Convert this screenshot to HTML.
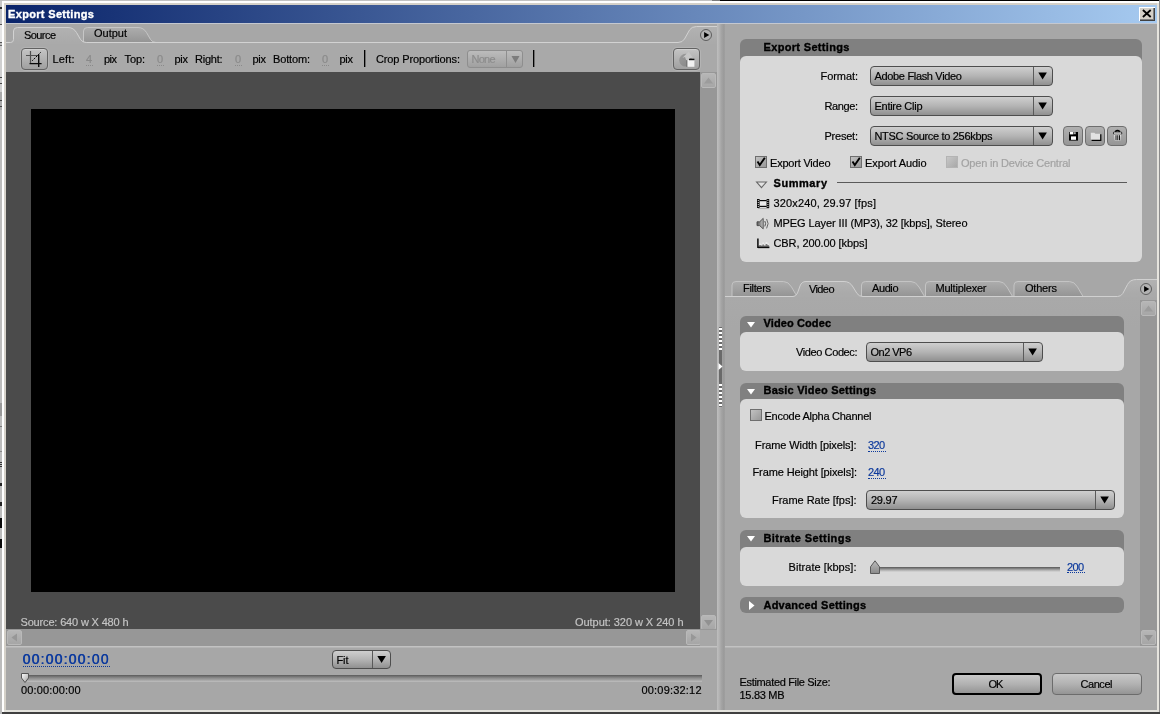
<!DOCTYPE html>
<html><head><meta charset="utf-8"><title>Export Settings</title>
<style>
html,body{margin:0;padding:0;width:1160px;height:714px;overflow:hidden;background:#d4d0c8;}
body{font-family:"Liberation Sans",sans-serif;font-size:11px;position:relative;}
.b{position:absolute;display:block;}
.t{position:absolute;white-space:nowrap;}
.du{position:absolute;height:0;border-top:1px dotted #000;}
#w{position:absolute;left:0;top:0;width:1160px;height:714px;overflow:hidden;will-change:transform;}
</style></head><body>
<div id="w">
<div class="b" style="left:0px;top:0px;width:1160px;height:714px;background:#d4d0c8;"></div>
<div class="b" style="left:0px;top:0px;width:1160px;height:1px;background:#c2c2c2;"></div>
<div class="b" style="left:712px;top:0px;width:8px;height:1px;background:#7a7a7a;"></div>
<div class="b" style="left:720px;top:0px;width:440px;height:1px;background:#000;"></div>
<div class="b" style="left:2px;top:1px;width:1157px;height:2px;background:#ffffff;"></div>
<div class="b" style="left:4px;top:3px;width:1153px;height:2px;background:#d4d0c8;"></div>
<div class="b" style="left:0px;top:0px;width:2px;height:714px;background:#bcbcbc;"></div>
<div class="b" style="left:2px;top:1px;width:2px;height:711px;background:#ffffff;"></div>
<div class="b" style="left:4px;top:3px;width:2px;height:707px;background:#d4d0c8;"></div>
<div class="b" style="left:0px;top:1px;width:2px;height:23px;background:#c8c8c8;"></div>
<div class="b" style="left:0px;top:7px;width:2px;height:2px;background:#333;"></div>
<div class="b" style="left:0px;top:24px;width:2px;height:1px;background:#555;"></div>
<div class="b" style="left:0px;top:25px;width:2px;height:17px;background:#e6e6e6;"></div>
<div class="b" style="left:0px;top:42px;width:2px;height:1px;background:#555;"></div>
<div class="b" style="left:0px;top:45px;width:2px;height:1px;background:#666;"></div>
<div class="b" style="left:0px;top:46px;width:2px;height:46px;background:#d0d0d0;"></div>
<div class="b" style="left:0px;top:77px;width:2px;height:1px;background:#444;"></div>
<div class="b" style="left:0px;top:83px;width:2px;height:1px;background:#444;"></div>
<div class="b" style="left:0px;top:92px;width:2px;height:18px;background:#aaaaaa;"></div>
<div class="b" style="left:0px;top:100px;width:2px;height:1px;background:#444;"></div>
<div class="b" style="left:0px;top:106px;width:2px;height:1px;background:#444;"></div>
<div class="b" style="left:0px;top:403px;width:2px;height:13px;background:#999;"></div>
<div class="b" style="left:0px;top:426px;width:2px;height:1px;background:#777;"></div>
<div class="b" style="left:0px;top:451px;width:2px;height:1px;background:#888;"></div>
<div class="b" style="left:0px;top:462px;width:2px;height:1px;background:#333;"></div>
<div class="b" style="left:0px;top:464px;width:2px;height:1px;background:#333;"></div>
<div class="b" style="left:0px;top:466px;width:2px;height:1px;background:#333;"></div>
<div class="b" style="left:0px;top:483px;width:2px;height:3px;background:#222;"></div>
<div class="b" style="left:0px;top:502px;width:2px;height:4px;background:#222;"></div>
<div class="b" style="left:0px;top:518px;width:2px;height:10px;background:#0a0a0a;"></div>
<div class="b" style="left:0px;top:539px;width:2px;height:9px;background:#0a0a0a;"></div>
<div class="b" style="left:1157px;top:3px;width:2px;height:709px;background:#e6e4de;"></div>
<div class="b" style="left:1159px;top:0px;width:1px;height:714px;background:#8c8c8c;"></div>
<div class="b" style="left:4px;top:710px;width:1155px;height:2px;background:#e4e3dd;"></div>
<div class="b" style="left:2px;top:712px;width:1158px;height:2px;background:#404040;"></div>
<div class="b" style="left:6px;top:23px;width:1151px;height:687px;background:#a7a7a7;"></div>
<div class="b" style="left:6px;top:5px;width:1151px;height:18px;background:linear-gradient(90deg,#0a246a 0%,#a6caf0 100%);"></div>
<div class="b" style="left:6px;top:23px;width:1151px;height:1px;background:#c4c8d0;"></div>
<div class="t" style="left:8.00px;top:7.00px;font-size:11px;line-height:14px;letter-spacing:0.336px;color:#fff;font-weight:bold;-webkit-text-stroke:0.35px;">Export Settings</div>
<div class="b" style="left:1139px;top:7px;width:16px;height:14px;background:#d4d0c8;box-shadow:inset 1px 1px 0 #fff, inset -1px -1px 0 #404040, inset -2px -2px 0 #808080;"><svg width="16" height="14" style="position:absolute;left:0;top:0"><path d="M3.9 3 L11.7 10 M11.7 3 L3.9 10" stroke="#000" stroke-width="1.8" fill="none"/></svg></div>
<svg class="b" style="left:0;top:0" width="1160" height="714" viewBox="0 0 1160 714"><defs><linearGradient id="gsel" x1="0" y1="0" x2="0" y2="1"><stop offset="0" stop-color="#b2b2b2"/><stop offset="0.35" stop-color="#aaaaaa"/><stop offset="1" stop-color="#a9a9a9"/></linearGradient><linearGradient id="gun" x1="0" y1="0" x2="0" y2="1"><stop offset="0" stop-color="#adadad"/><stop offset="1" stop-color="#949494"/></linearGradient></defs><path d="M83.5 42.5 L83.5 31 Q83.5 27.5 87.5 27.5 L138 27.5 Q143.5 27.5 146.5 32.5 L150.5 39.5 Q152.5 42.5 156 42.5 Z" fill="url(#gun)" stroke="#c6c6c6" stroke-width="1"/><path d="M6 42.5 L10.5 42.5 Q13.5 42.5 13.5 39.5 L13.5 31 Q13.5 27.5 17.5 27.5 L68 27.5 Q73.5 27.5 76.5 32.5 L80.5 39.5 Q82.5 42.5 86.5 42.5 L678 42.5 Q682.5 42.5 684.5 39 L689.5 30 Q691.5 26.5 696.5 26.5 L717 26.5 L717 72 L6 72 Z" fill="url(#gsel)" stroke="none"/><path d="M6 42.5 L10.5 42.5 Q13.5 42.5 13.5 39.5 L13.5 31 Q13.5 27.5 17.5 27.5 L68 27.5 Q73.5 27.5 76.5 32.5 L80.5 39.5 Q82.5 42.5 86.5 42.5 L678 42.5 Q682.5 42.5 684.5 39 L689.5 30 Q691.5 26.5 696.5 26.5 L717 26.5" fill="none" stroke="#d2d2d2" stroke-width="1"/></svg>
<div class="b" style="left:6px;top:44px;width:711px;height:28px;background:#a9a9a9;"></div>
<div class="t" style="left:24.00px;top:27.50px;font-size:11px;line-height:14px;letter-spacing:-0.571px;color:#000;-webkit-text-stroke:0.18px;">Source</div>
<div class="t" style="left:94.00px;top:26.00px;font-size:11px;line-height:14px;letter-spacing:-0.004px;color:#000;-webkit-text-stroke:0.18px;">Output</div>
<svg class="b" style="left:698px;top:27px" width="16" height="16"><circle cx="8" cy="8" r="5.5" fill="#b2b2b2" stroke="#555" stroke-width="0.9"/><path d="M6.1 5.1 L11.3 8 L6.1 10.9 Z" fill="#000"/></svg>
<div class="b" style="left:21px;top:48px;width:27px;height:22px;border:1px solid #626262;border-radius:4px;background:linear-gradient(180deg,#c4c4c4 0%,#b4b4b4 45%,#a0a0a0 100%);box-shadow:inset 0 1px 0 #d0d0d0, 0 0 0 1px rgba(255,255,255,.13);box-sizing:border-box;"><svg width="25" height="20" style="position:absolute;left:0;top:0"><path d="M8.5 2 L8.5 14.5 M4 6.5 L16.5 6.5" stroke="#505050" stroke-width="1.2" fill="none"/><path d="M16.7 5.5 L16.7 18 M7.5 14.6 L19.6 14.6" stroke="#0a0a0a" stroke-width="1.4" fill="none"/><path d="M10.2 11.8 L19 3" stroke="#000" stroke-width="1" stroke-dasharray="1.6 1" fill="none"/></svg></div>
<div class="t" style="left:52.50px;top:52.00px;font-size:11px;line-height:14px;letter-spacing:0.149px;color:#000;-webkit-text-stroke:0.18px;">Left:</div>
<div class="t" style="left:86.00px;top:52.00px;font-size:11px;line-height:14px;letter-spacing:0.000px;color:#8a8a8a;-webkit-text-stroke:0.18px;">4</div>
<div class="du" style="left:86.0px;top:65px;width:6.6px;border-top-color:#8a8a8a"></div>
<div class="t" style="left:104.00px;top:52.00px;font-size:11px;line-height:14px;letter-spacing:-0.531px;color:#000;-webkit-text-stroke:0.18px;">pix</div>
<div class="t" style="left:124.50px;top:52.00px;font-size:11px;line-height:14px;letter-spacing:-0.097px;color:#000;-webkit-text-stroke:0.18px;">Top:</div>
<div class="t" style="left:157.00px;top:52.00px;font-size:11px;line-height:14px;letter-spacing:0.000px;color:#8a8a8a;-webkit-text-stroke:0.18px;">0</div>
<div class="du" style="left:157.0px;top:65px;width:6.6px;border-top-color:#8a8a8a"></div>
<div class="t" style="left:174.50px;top:52.00px;font-size:11px;line-height:14px;letter-spacing:-0.281px;color:#000;-webkit-text-stroke:0.18px;">pix</div>
<div class="t" style="left:195.00px;top:52.00px;font-size:11px;line-height:14px;letter-spacing:-0.247px;color:#000;-webkit-text-stroke:0.18px;">Right:</div>
<div class="t" style="left:235.00px;top:52.00px;font-size:11px;line-height:14px;letter-spacing:0.000px;color:#8a8a8a;-webkit-text-stroke:0.18px;">0</div>
<div class="du" style="left:235.0px;top:65px;width:6.6px;border-top-color:#8a8a8a"></div>
<div class="t" style="left:252.50px;top:52.00px;font-size:11px;line-height:14px;letter-spacing:-0.281px;color:#000;-webkit-text-stroke:0.18px;">pix</div>
<div class="t" style="left:273.00px;top:52.00px;font-size:11px;line-height:14px;letter-spacing:-0.151px;color:#000;-webkit-text-stroke:0.18px;">Bottom:</div>
<div class="t" style="left:322.00px;top:52.00px;font-size:11px;line-height:14px;letter-spacing:0.000px;color:#8a8a8a;-webkit-text-stroke:0.18px;">0</div>
<div class="du" style="left:322.0px;top:65px;width:6.6px;border-top-color:#8a8a8a"></div>
<div class="t" style="left:339.50px;top:52.00px;font-size:11px;line-height:14px;letter-spacing:-0.281px;color:#000;-webkit-text-stroke:0.18px;">pix</div>
<div class="b" style="left:364px;top:50px;width:1px;height:17px;background:#000;box-shadow:1px 0 0 rgba(0,0,0,.35);"></div>
<div class="t" style="left:376.00px;top:52.00px;font-size:11px;line-height:14px;letter-spacing:-0.138px;color:#000;-webkit-text-stroke:0.18px;">Crop Proportions:</div>
<div class="b" style="left:467px;top:50px;width:56px;height:18px;box-sizing:border-box;border:1px solid #8e8e8e;border-radius:3px;background:linear-gradient(180deg,#bcbcbc,#a0a0a0);"><div style="position:absolute;left:38px;top:0;width:1px;height:16px;background:#8e8e8e"></div><svg width="54" height="16" style="position:absolute;left:0;top:0"><path d="M43.5 5 L51.5 5 L47.5 12 Z" fill="#7c7c7c"/></svg></div>
<div class="t" style="left:471.50px;top:52.00px;font-size:11px;line-height:14px;letter-spacing:-0.766px;color:#8c8c8c;-webkit-text-stroke:0.18px;">None</div>
<div class="b" style="left:533px;top:50px;width:1px;height:17px;background:#000;box-shadow:1px 0 0 rgba(0,0,0,.35);"></div>
<div class="b" style="left:673px;top:48px;width:27px;height:22px;border:1px solid #626262;border-radius:4px;background:linear-gradient(180deg,#c4c4c4 0%,#b4b4b4 45%,#a0a0a0 100%);box-shadow:inset 0 1px 0 #d0d0d0, 0 0 0 1px rgba(255,255,255,.13);box-sizing:border-box;"><svg width="25" height="20" style="position:absolute;left:0;top:0"><defs><linearGradient id="gc" x1="0" y1="0" x2="1" y2="1"><stop offset="0" stop-color="#9c9c9c"/><stop offset="1" stop-color="#858585"/></linearGradient></defs><circle cx="11.6" cy="11.2" r="6.4" fill="url(#gc)"/><path d="M14.6 2.8 L18.8 8.6 L16.2 9 L15.6 12.2 L12.2 11.2 L11 8 L8.5 8.8 Z" fill="#c6c6c6"/><rect x="12.6" y="11" width="1" height="7" fill="#5a5a5a"/><rect x="13.4" y="11" width="7" height="6.8" fill="#f2f2f2"/><rect x="15" y="9.7" width="5.4" height="1.5" fill="#111"/></svg></div>
<div class="b" style="left:6px;top:72px;width:694px;height:557px;background:#4b4b4b;"></div>
<div class="b" style="left:31px;top:109px;width:644px;height:483px;background:#000;"></div>
<div class="t" style="left:20.50px;top:614.50px;font-size:11px;line-height:14px;letter-spacing:-0.165px;color:#c4c4c4;-webkit-text-stroke:0.18px;">Source: 640 w X 480 h</div>
<div class="t" style="left:575.00px;top:614.50px;font-size:11px;line-height:14px;letter-spacing:-0.048px;color:#c4c4c4;-webkit-text-stroke:0.18px;">Output: 320 w X 240 h</div>
<div class="b" style="left:700px;top:72px;width:17px;height:574px;background:#979797;"></div>
<div class="b" style="left:701px;top:73px;width:15px;height:15px;box-sizing:border-box;border:1px solid #b9b9b9;border-radius:2px;background:linear-gradient(180deg,#b6b6b6,#a6a6a6);"><svg width="13" height="13" style="position:absolute;left:0;top:0"><path d="M2 9.5 L11 9.5 L6.5 3.5 Z" fill="#9c9c9c"/></svg></div>
<div class="b" style="left:701px;top:615px;width:15px;height:15px;box-sizing:border-box;border:1px solid #b9b9b9;border-radius:2px;background:linear-gradient(180deg,#b6b6b6,#a6a6a6);"><svg width="13" height="13" style="position:absolute;left:0;top:0"><path d="M2 4 L11 4 L6.5 10 Z" fill="#919191"/></svg></div>
<div class="b" style="left:6px;top:629px;width:711px;height:17px;background:#979797;"></div>
<div class="b" style="left:7px;top:630px;width:15px;height:15px;box-sizing:border-box;border:1px solid #b9b9b9;border-radius:2px;background:linear-gradient(180deg,#b6b6b6,#a6a6a6);"><svg width="13" height="13" style="position:absolute;left:0;top:0"><path d="M9 2.5 L9 10.5 L3.5 6.5 Z" fill="#979797"/></svg></div>
<div class="b" style="left:686px;top:630px;width:15px;height:15px;box-sizing:border-box;border:1px solid #b9b9b9;border-radius:2px;background:linear-gradient(180deg,#b6b6b6,#a6a6a6);"><svg width="13" height="13" style="position:absolute;left:0;top:0"><path d="M4 2.5 L4 10.5 L9.5 6.5 Z" fill="#979797"/></svg></div>
<div class="b" style="left:700px;top:630px;width:17px;height:16px;background:#a7a7a7;"></div>
<div class="b" style="left:6px;top:646px;width:1151px;height:1px;background:#c2c2c2;"></div>
<div class="b" style="left:6px;top:647px;width:1151px;height:1px;background:#b4b4b4;"></div>
<div class="t" style="left:22.50px;top:651.00px;font-size:14px;line-height:17px;letter-spacing:1.200px;color:#0c399c;-webkit-text-stroke:0.18px;text-shadow:0.4px 0 0 #1243a8;">00:00:00:00</div>
<div class="du" style="left:22.5px;top:666px;width:87.5px;border-top-color:#0c399c"></div>
<div class="b" style="left:332px;top:650px;width:59px;height:19px;box-sizing:border-box;border:1px solid #4e4e4e;border-radius:4px;background:linear-gradient(180deg,#cfcfcf 0%,#b4b4b4 50%,#909090 100%);"><div style="position:absolute;left:39px;top:0;width:1px;height:17px;background:#5a5a5a"></div><svg width="57" height="17" style="position:absolute;left:0;top:0"><path d="M44.3 5.1 L52.9 5.1 L48.6 12.1 Z" fill="#000"/></svg></div>
<div class="t" style="left:336.50px;top:653.00px;font-size:11px;line-height:14px;letter-spacing:-0.110px;color:#000;-webkit-text-stroke:0.18px;">Fit</div>
<div class="b" style="left:27px;top:675px;width:675px;height:7px;background:linear-gradient(180deg,#5a5a5a 0%,#747474 22%,#8e8e8e 45%,#a0a0a0 68%,#b4b4b4 86%,#bcbcbc 100%);"></div>
<svg class="b" style="left:20px;top:672px" width="10" height="12"><defs><linearGradient id="gh" x1="0" y1="0" x2="1" y2="1"><stop offset="0" stop-color="#fff"/><stop offset="1" stop-color="#a0a0a0"/></linearGradient></defs><path d="M1.5 1.5 L8.5 1.5 L8.5 6 L5 10.5 L1.5 6 Z" fill="url(#gh)" stroke="#555" stroke-width="1"/></svg>
<div class="t" style="left:21.00px;top:682.50px;font-size:11px;line-height:14px;letter-spacing:0.139px;color:#000;-webkit-text-stroke:0.18px;">00:00:00:00</div>
<div class="t" style="left:641.50px;top:682.50px;font-size:11px;line-height:14px;letter-spacing:0.189px;color:#000;-webkit-text-stroke:0.18px;">00:09:32:12</div>
<div class="b" style="left:717px;top:24px;width:8px;height:686px;background:linear-gradient(90deg,#bebebe 0%,#b4b4b4 25%,#a4a4a4 55%,#9a9a9a 85%,#a0a0a0 100%);"></div>
<svg class="b" style="left:716px;top:325px" width="10" height="84"><rect x="3" y="2" width="3" height="80" fill="#6a6a6a"/><rect x="3" y="3" width="3" height="2" fill="#fff"/><rect x="3" y="59" width="3" height="2" fill="#fff"/><rect x="3" y="7" width="3" height="2" fill="#fff"/><rect x="3" y="63" width="3" height="2" fill="#fff"/><rect x="3" y="11" width="3" height="2" fill="#fff"/><rect x="3" y="67" width="3" height="2" fill="#fff"/><rect x="3" y="15" width="3" height="2" fill="#fff"/><rect x="3" y="71" width="3" height="2" fill="#fff"/><rect x="3" y="19" width="3" height="2" fill="#fff"/><rect x="3" y="75" width="3" height="2" fill="#fff"/><rect x="3" y="23" width="3" height="2" fill="#fff"/><rect x="3" y="79" width="3" height="2" fill="#fff"/><path d="M2.5 38 L6.5 41.5 L2.5 45 Z" fill="#fff"/></svg>
<div class="b" style="left:740px;top:39px;width:402px;height:23px;background:#808080;border-radius:6px 6px 0 0;"></div>
<div class="b" style="left:740px;top:56px;width:402px;height:206px;background:#d9d9d9;border-radius:6px;"></div>
<div class="t" style="left:763.50px;top:39.50px;font-size:11px;line-height:14px;letter-spacing:0.336px;color:#000;font-weight:bold;-webkit-text-stroke:0.35px;">Export Settings</div>
<div class="t" style="left:820.50px;top:68.50px;font-size:11px;line-height:14px;letter-spacing:-0.066px;color:#000;-webkit-text-stroke:0.18px;">Format:</div>
<div class="t" style="left:824.50px;top:98.50px;font-size:11px;line-height:14px;letter-spacing:-0.394px;color:#000;-webkit-text-stroke:0.18px;">Range:</div>
<div class="t" style="left:824.50px;top:128.50px;font-size:11px;line-height:14px;letter-spacing:-0.225px;color:#000;-webkit-text-stroke:0.18px;">Preset:</div>
<div class="b" style="left:870px;top:66px;width:183px;height:20px;box-sizing:border-box;border:1px solid #4e4e4e;border-radius:4px;background:linear-gradient(180deg,#cfcfcf 0%,#b4b4b4 50%,#909090 100%);"><div style="position:absolute;left:162px;top:0;width:1px;height:18px;background:#5a5a5a"></div><svg width="181" height="18" style="position:absolute;left:0;top:0"><path d="M167.3 5.6 L175.9 5.6 L171.6 12.6 Z" fill="#000"/></svg></div>
<div class="t" style="left:874.50px;top:68.50px;font-size:11px;line-height:14px;letter-spacing:-0.329px;color:#000;-webkit-text-stroke:0.18px;">Adobe Flash Video</div>
<div class="b" style="left:870px;top:96px;width:183px;height:20px;box-sizing:border-box;border:1px solid #4e4e4e;border-radius:4px;background:linear-gradient(180deg,#cfcfcf 0%,#b4b4b4 50%,#909090 100%);"><div style="position:absolute;left:162px;top:0;width:1px;height:18px;background:#5a5a5a"></div><svg width="181" height="18" style="position:absolute;left:0;top:0"><path d="M167.3 5.6 L175.9 5.6 L171.6 12.6 Z" fill="#000"/></svg></div>
<div class="t" style="left:874.50px;top:98.50px;font-size:11px;line-height:14px;letter-spacing:-0.274px;color:#000;-webkit-text-stroke:0.18px;">Entire Clip</div>
<div class="b" style="left:870px;top:126px;width:183px;height:20px;box-sizing:border-box;border:1px solid #4e4e4e;border-radius:4px;background:linear-gradient(180deg,#cfcfcf 0%,#b4b4b4 50%,#909090 100%);"><div style="position:absolute;left:162px;top:0;width:1px;height:18px;background:#5a5a5a"></div><svg width="181" height="18" style="position:absolute;left:0;top:0"><path d="M167.3 5.6 L175.9 5.6 L171.6 12.6 Z" fill="#000"/></svg></div>
<div class="t" style="left:874.50px;top:128.50px;font-size:11px;line-height:14px;letter-spacing:-0.321px;color:#000;-webkit-text-stroke:0.18px;">NTSC Source to 256kbps</div>
<div class="b" style="left:1063px;top:126px;width:20px;height:20px;box-sizing:border-box;border:1px solid #6e6e6e;border-radius:4px;background:linear-gradient(180deg,#b0b0b0,#969696);"><svg width="18" height="18" style="position:absolute;left:0;top:0"><rect x="5" y="5" width="9" height="8.6" fill="#000"/><rect x="5.8" y="5" width="3.6" height="2.4" fill="#fff"/><rect x="10.2" y="5.2" width="1.4" height="2" fill="#d8d8d8"/><rect x="7" y="9.4" width="5" height="3.4" fill="#fff"/></svg></div>
<div class="b" style="left:1085px;top:126px;width:20px;height:20px;box-sizing:border-box;border:1px solid #6e6e6e;border-radius:4px;background:linear-gradient(180deg,#b0b0b0,#969696);"><svg width="18" height="18" style="position:absolute;left:0;top:0"><path d="M5.6 13.4 L14.8 13.4 L14.8 7.2" stroke="#000" stroke-width="1.2" fill="none"/><path d="M4.8 12.6 L4.8 5.8 L8.4 5.8 L9.4 6.8 L14 6.8 L14 12.6 Z" fill="#e2e2e2"/></svg></div>
<div class="b" style="left:1107px;top:126px;width:20px;height:20px;box-sizing:border-box;border:1px solid #6e6e6e;border-radius:4px;background:linear-gradient(180deg,#b0b0b0,#969696);"><svg width="18" height="18" style="position:absolute;left:0;top:0"><path d="M7.2 4.6 Q9.5 2.6 11.8 4.6" stroke="#000" stroke-width="1.4" fill="none"/><rect x="5.4" y="5" width="8.4" height="2.2" rx="1" fill="#f0f0f0" stroke="#000" stroke-width="0.8"/><path d="M6.2 7.6 L13 7.6 L12.4 13.6 L6.8 13.6 Z" fill="#f4f4f4"/><path d="M8 8.2 L8 13.2 M9.8 8.2 L9.8 13.2 M11.6 8.2 L11.6 13.2" stroke="#000" stroke-width="1"/></svg></div>
<div class="b" style="left:755px;top:156px;width:12px;height:12px;box-sizing:border-box;border:1px solid #6e6e6e;background:linear-gradient(135deg,#c2c2c2,#989898);"><svg width="12" height="12" style="position:absolute;left:-1px;top:-1px"><path d="M2.5 5.5 L4.8 9 L9.8 1.8" stroke="#000" stroke-width="1.9" fill="none"/></svg></div>
<div class="t" style="left:770.00px;top:155.70px;font-size:11px;line-height:14px;letter-spacing:-0.208px;color:#000;-webkit-text-stroke:0.18px;">Export Video</div>
<div class="b" style="left:850px;top:156px;width:12px;height:12px;box-sizing:border-box;border:1px solid #6e6e6e;background:linear-gradient(135deg,#c2c2c2,#989898);"><svg width="12" height="12" style="position:absolute;left:-1px;top:-1px"><path d="M2.5 5.5 L4.8 9 L9.8 1.8" stroke="#000" stroke-width="1.9" fill="none"/></svg></div>
<div class="t" style="left:865.00px;top:155.70px;font-size:11px;line-height:14px;letter-spacing:-0.080px;color:#000;-webkit-text-stroke:0.18px;">Export Audio</div>
<div class="b" style="left:946px;top:156px;width:12px;height:12px;box-sizing:border-box;border:1px solid #a8a8a8;background:linear-gradient(135deg,#c2c2c2,#989898);opacity:.75;"></div>
<div class="t" style="left:961.00px;top:155.70px;font-size:11px;line-height:14px;letter-spacing:-0.201px;color:#a2a2a2;-webkit-text-stroke:0.18px;">Open in Device Central</div>
<svg class="b" style="left:755px;top:180px" width="13" height="9"><path d="M1.6 2 L11.4 2 L6.5 7.6 Z" fill="#e2e2e2" stroke="#666" stroke-width="1.1"/></svg>
<div class="t" style="left:773.50px;top:175.60px;font-size:11px;line-height:14px;letter-spacing:0.561px;color:#000;font-weight:bold;-webkit-text-stroke:0.35px;">Summary</div>
<div class="b" style="left:837px;top:182px;width:290px;height:1px;background:#5a5a5a;"></div>
<svg class="b" style="left:757px;top:199px" width="13" height="10"><rect x="0" y="0" width="2.6" height="9" fill="#0a0a0a"/><rect x="9.6" y="0" width="2.6" height="9" fill="#0a0a0a"/><rect x="2.6" y="1" width="7" height="7" fill="#0a0a0a"/><rect x="2.8" y="2.2" width="6.6" height="4.6" fill="#ececec"/><rect x="0.8" y="1" width="1" height="1" fill="#ddd"/><rect x="0.8" y="3" width="1" height="1" fill="#ddd"/><rect x="0.8" y="5" width="1" height="1" fill="#ddd"/><rect x="0.8" y="7" width="1" height="1" fill="#ddd"/><rect x="10.4" y="1" width="1" height="1" fill="#ddd"/><rect x="10.4" y="3" width="1" height="1" fill="#ddd"/><rect x="10.4" y="5" width="1" height="1" fill="#ddd"/><rect x="10.4" y="7" width="1" height="1" fill="#ddd"/><rect x="1" y="9" width="11" height="1" fill="#b0b0b0"/></svg>
<div class="t" style="left:773.50px;top:196.00px;font-size:11px;line-height:14px;letter-spacing:0.148px;color:#000;-webkit-text-stroke:0.18px;">320x240, 29.97 [fps]</div>
<svg class="b" style="left:756px;top:217px" width="14" height="13"><defs><linearGradient id="gsp" x1="0" y1="0" x2="1" y2="0"><stop offset="0" stop-color="#5a5a5a"/><stop offset="1" stop-color="#c4c4c4"/></linearGradient></defs><path d="M1 4.8 L3.6 4.8 L7.2 1.4 L7.2 11.8 L3.6 8.6 L1 8.6 Z" fill="url(#gsp)" stroke="#484848" stroke-width="0.9"/><path d="M8.8 4 Q10.4 6.6 8.8 9.4" stroke="#555" stroke-width="1" fill="none"/><path d="M10.6 2 Q13.6 6.6 10.6 11.4" stroke="#666" stroke-width="1" fill="none"/></svg>
<div class="t" style="left:773.50px;top:216.00px;font-size:11px;line-height:14px;letter-spacing:-0.091px;color:#000;-webkit-text-stroke:0.18px;">MPEG Layer III (MP3), 32 [kbps], Stereo</div>
<svg class="b" style="left:757px;top:238px" width="13" height="11"><path d="M2.2 7.6 L2.2 5.6 L3.8 5.6 L3.8 6.6 L5.4 6.6 L5.4 4.4 L7 4.4 L7 6.2 L8.6 6.2 L8.6 4 L10.4 4 L10.4 5.4 L11.8 5.4 L11.8 7.6 Z" fill="#ececec"/><path d="M2.2 8.6 L2.2 7 L3.8 7 L3.8 7.6 L5.4 7.6 L5.4 6.4 L7 6.4 L7 7.4 L8.6 7.4 L8.6 6 L10.4 6 L10.4 7 L11.8 7 L11.8 8.6 Z" fill="#7a7a7a"/><path d="M0.9 0.6 L0.9 9.2 L12.4 9.2" stroke="#0a0a0a" stroke-width="1.5" fill="none"/><rect x="1" y="10" width="11.4" height="1" fill="#b8b8b8"/></svg>
<div class="t" style="left:773.50px;top:235.70px;font-size:11px;line-height:14px;letter-spacing:-0.082px;color:#000;-webkit-text-stroke:0.18px;">CBR, 200.00 [kbps]</div>
<svg class="b" style="left:0;top:0" width="1160" height="714" viewBox="0 0 1160 714"><path d="M732 296.5 L732 285 Q732 281.5 736 281.5 L783.5 281.5 Q788.5 281.5 791.5 287 L797.0 296.5 Z" fill="url(#gun)" stroke="#c4c4c4" stroke-width="1"/><path d="M1014 296.5 L1014 285 Q1014 281.5 1018 281.5 L1069.5 281.5 Q1074.5 281.5 1077.5 287 L1083.0 296.5 Z" fill="url(#gun)" stroke="#c4c4c4" stroke-width="1"/><path d="M925.5 296.5 L925.5 285 Q925.5 281.5 929.5 281.5 L999 281.5 Q1004 281.5 1007 287 L1012.5 296.5 Z" fill="url(#gun)" stroke="#c4c4c4" stroke-width="1"/><path d="M861.5 296.5 L861.5 285 Q861.5 281.5 865.5 281.5 L911 281.5 Q916 281.5 919 287 L924.5 296.5 Z" fill="url(#gun)" stroke="#c4c4c4" stroke-width="1"/><path d="M725 296.5 L793 296.5 Q796 296.5 797.5 293 L800 286 Q801.5 281.5 806 281.5 L844 281.5 Q850 281.5 853 287 L857 293.5 Q859 296.5 863 296.5 L1117.5 296.5 Q1121 296.5 1122.8 293.5 L1127.5 284.5 Q1130 279.5 1136.5 279.5 L1157 279.5 L1157 320 L725 320 Z" fill="url(#gsel)"/><path d="M725 296.5 L793 296.5 Q796 296.5 797.5 293 L800 286 Q801.5 281.5 806 281.5 L844 281.5 Q850 281.5 853 287 L857 293.5 Q859 296.5 863 296.5 L1117.5 296.5 Q1121 296.5 1122.8 293.5 L1127.5 284.5 Q1130 279.5 1136.5 279.5 L1157 279.5" fill="none" stroke="#d0d0d0" stroke-width="1"/></svg>
<div class="b" style="left:725px;top:297px;width:432px;height:30px;background:linear-gradient(180deg,#a9a9a9,#a7a7a7);"></div>
<div class="t" style="left:743.00px;top:280.50px;font-size:11px;line-height:14px;letter-spacing:-0.324px;color:#000;-webkit-text-stroke:0.18px;">Filters</div>
<div class="t" style="left:809.00px;top:281.50px;font-size:11px;line-height:14px;letter-spacing:-0.609px;color:#000;-webkit-text-stroke:0.18px;">Video</div>
<div class="t" style="left:872.00px;top:280.50px;font-size:11px;line-height:14px;letter-spacing:-0.409px;color:#000;-webkit-text-stroke:0.18px;">Audio</div>
<div class="t" style="left:935.50px;top:280.50px;font-size:11px;line-height:14px;letter-spacing:-0.219px;color:#000;-webkit-text-stroke:0.18px;">Multiplexer</div>
<div class="t" style="left:1025.00px;top:280.50px;font-size:11px;line-height:14px;letter-spacing:-0.202px;color:#000;-webkit-text-stroke:0.18px;">Others</div>
<svg class="b" style="left:1138px;top:281px" width="16" height="16"><circle cx="8" cy="8" r="5.5" fill="#b2b2b2" stroke="#555" stroke-width="0.9"/><path d="M6.1 5.1 L11.3 8 L6.1 10.9 Z" fill="#000"/></svg>
<div class="b" style="left:1140px;top:300px;width:17px;height:346px;background:#979797;"></div>
<div class="b" style="left:1141px;top:301px;width:15px;height:15px;box-sizing:border-box;border:1px solid #b9b9b9;border-radius:2px;background:linear-gradient(180deg,#b6b6b6,#a6a6a6);"><svg width="13" height="13" style="position:absolute;left:0;top:0"><path d="M2 9.5 L11 9.5 L6.5 3.5 Z" fill="#9c9c9c"/></svg></div>
<div class="b" style="left:1141px;top:630px;width:15px;height:15px;box-sizing:border-box;border:1px solid #b9b9b9;border-radius:2px;background:linear-gradient(180deg,#b6b6b6,#a6a6a6);"><svg width="13" height="13" style="position:absolute;left:0;top:0"><path d="M2 4 L11 4 L6.5 10 Z" fill="#919191"/></svg></div>
<div class="b" style="left:740px;top:316px;width:384px;height:22px;background:#808080;border-radius:6px 6px 0 0;"></div>
<div class="b" style="left:740px;top:332px;width:384px;height:39px;background:#d9d9d9;border-radius:6px;"></div>
<div class="t" style="left:763.50px;top:315.50px;font-size:11px;line-height:14px;letter-spacing:0.107px;color:#000;font-weight:bold;-webkit-text-stroke:0.35px;">Video Codec</div>
<svg class="b" style="left:746px;top:321px" width="10" height="8"><path d="M1 1 L9 1 L5 6.5 Z" fill="#fff"/></svg>
<div class="t" style="left:796.00px;top:344.50px;font-size:11px;line-height:14px;letter-spacing:-0.395px;color:#000;-webkit-text-stroke:0.18px;">Video Codec:</div>
<div class="b" style="left:866px;top:342px;width:177px;height:20px;box-sizing:border-box;border:1px solid #4e4e4e;border-radius:4px;background:linear-gradient(180deg,#cfcfcf 0%,#b4b4b4 50%,#909090 100%);"><div style="position:absolute;left:156px;top:0;width:1px;height:18px;background:#5a5a5a"></div><svg width="175" height="18" style="position:absolute;left:0;top:0"><path d="M161.3 5.6 L169.9 5.6 L165.6 12.6 Z" fill="#000"/></svg></div>
<div class="t" style="left:870.50px;top:344.50px;font-size:11px;line-height:14px;letter-spacing:-0.523px;color:#000;-webkit-text-stroke:0.18px;">On2 VP6</div>
<div class="b" style="left:740px;top:383px;width:384px;height:22px;background:#808080;border-radius:6px 6px 0 0;"></div>
<div class="b" style="left:740px;top:399px;width:384px;height:119px;background:#d9d9d9;border-radius:6px;"></div>
<div class="t" style="left:763.50px;top:382.50px;font-size:11px;line-height:14px;letter-spacing:0.205px;color:#000;font-weight:bold;-webkit-text-stroke:0.35px;">Basic Video Settings</div>
<svg class="b" style="left:746px;top:388px" width="10" height="8"><path d="M1 1 L9 1 L5 6.5 Z" fill="#fff"/></svg>
<div class="b" style="left:750px;top:409px;width:12px;height:12px;box-sizing:border-box;border:1px solid #6e6e6e;background:linear-gradient(135deg,#c2c2c2,#989898);"></div>
<div class="t" style="left:764.50px;top:408.60px;font-size:11px;line-height:14px;letter-spacing:-0.259px;color:#000;-webkit-text-stroke:0.18px;">Encode Alpha Channel</div>
<div class="t" style="left:755.00px;top:438.00px;font-size:11px;line-height:14px;letter-spacing:-0.090px;color:#000;-webkit-text-stroke:0.18px;">Frame Width [pixels]:</div>
<div class="t" style="left:868.00px;top:438.00px;font-size:11px;line-height:14px;letter-spacing:-0.677px;color:#0c399c;-webkit-text-stroke:0.18px;">320</div>
<div class="du" style="left:868.0px;top:451px;width:17.5px;border-top-color:#0c399c"></div>
<div class="t" style="left:752.50px;top:465.00px;font-size:11px;line-height:14px;letter-spacing:-0.118px;color:#000;-webkit-text-stroke:0.18px;">Frame Height [pixels]:</div>
<div class="t" style="left:868.00px;top:465.00px;font-size:11px;line-height:14px;letter-spacing:-0.677px;color:#0c399c;-webkit-text-stroke:0.18px;">240</div>
<div class="du" style="left:868.0px;top:478px;width:17.5px;border-top-color:#0c399c"></div>
<div class="t" style="left:772.00px;top:492.70px;font-size:11px;line-height:14px;letter-spacing:-0.029px;color:#000;-webkit-text-stroke:0.18px;">Frame Rate [fps]:</div>
<div class="b" style="left:866px;top:490px;width:249px;height:20px;box-sizing:border-box;border:1px solid #4e4e4e;border-radius:4px;background:linear-gradient(180deg,#cfcfcf 0%,#b4b4b4 50%,#909090 100%);"><div style="position:absolute;left:228px;top:0;width:1px;height:18px;background:#5a5a5a"></div><svg width="247" height="18" style="position:absolute;left:0;top:0"><path d="M233.3 5.6 L241.9 5.6 L237.6 12.6 Z" fill="#000"/></svg></div>
<div class="t" style="left:871.00px;top:492.70px;font-size:11px;line-height:14px;letter-spacing:-0.257px;color:#000;-webkit-text-stroke:0.18px;">29.97</div>
<div class="b" style="left:740px;top:530px;width:384px;height:23px;background:#808080;border-radius:6px 6px 0 0;"></div>
<div class="b" style="left:740px;top:547px;width:384px;height:39px;background:#d9d9d9;border-radius:6px;"></div>
<div class="t" style="left:763.50px;top:530.50px;font-size:11px;line-height:14px;letter-spacing:0.414px;color:#000;font-weight:bold;-webkit-text-stroke:0.35px;">Bitrate Settings</div>
<svg class="b" style="left:746px;top:535px" width="10" height="8"><path d="M1 1 L9 1 L5 6.5 Z" fill="#fff"/></svg>
<div class="t" style="left:788.50px;top:559.70px;font-size:11px;line-height:14px;letter-spacing:0.053px;color:#000;-webkit-text-stroke:0.18px;">Bitrate [kbps]:</div>
<div class="b" style="left:879px;top:567px;width:181px;height:5px;background:linear-gradient(180deg,#585858 0%,#808080 30%,#a4a4a4 55%,#c4c4c4 80%,#d6d6d6 100%);"></div>
<svg class="b" style="left:869px;top:559px" width="12" height="16"><defs><linearGradient id="gb" x1="0" y1="0" x2="0" y2="1"><stop offset="0" stop-color="#bcbcbc"/><stop offset="1" stop-color="#8a8a8a"/></linearGradient></defs><path d="M1.5 14.5 L1.5 7.8 L6 1.8 L10.5 7.8 L10.5 14.5 Z" fill="url(#gb)" stroke="#5a5a5a" stroke-width="1"/></svg>
<div class="t" style="left:1067.00px;top:559.50px;font-size:11px;line-height:14px;letter-spacing:-0.677px;color:#0c399c;-webkit-text-stroke:0.18px;">200</div>
<div class="du" style="left:1067.0px;top:572px;width:17.5px;border-top-color:#0c399c"></div>
<div class="b" style="left:740px;top:597px;width:384px;height:16px;background:#808080;border-radius:6px;"></div>
<div class="t" style="left:763.50px;top:597.50px;font-size:11px;line-height:14px;letter-spacing:0.217px;color:#000;font-weight:bold;-webkit-text-stroke:0.35px;">Advanced Settings</div>
<svg class="b" style="left:748px;top:600px" width="8" height="11"><path d="M1 1 L6.5 5.5 L1 10 Z" fill="#fff"/></svg>
<div class="t" style="left:739.50px;top:674.50px;font-size:11px;line-height:14px;letter-spacing:-0.326px;color:#000;-webkit-text-stroke:0.18px;">Estimated File Size:</div>
<div class="t" style="left:739.50px;top:688.30px;font-size:11px;line-height:14px;letter-spacing:-0.298px;color:#000;-webkit-text-stroke:0.18px;">15.83 MB</div>
<div class="b" style="left:952px;top:673px;width:90px;height:22px;box-sizing:border-box;border-radius:4px;background:linear-gradient(180deg,#c8c8c8 0%,#b2b2b2 50%,#949494 100%);border:2px solid #000;"></div>
<div class="b" style="left:1052px;top:673px;width:90px;height:22px;box-sizing:border-box;border-radius:4px;background:linear-gradient(180deg,#c8c8c8 0%,#b2b2b2 50%,#949494 100%);border:1px solid #6c6c6c;"></div>
<div class="t" style="left:988.50px;top:676.50px;font-size:11px;line-height:14px;letter-spacing:-1.000px;color:#000;-webkit-text-stroke:0.18px;">OK</div>
<div class="t" style="left:1080.50px;top:676.50px;font-size:11px;line-height:14px;letter-spacing:-0.448px;color:#000;-webkit-text-stroke:0.18px;">Cancel</div>
</div>
</body></html>
